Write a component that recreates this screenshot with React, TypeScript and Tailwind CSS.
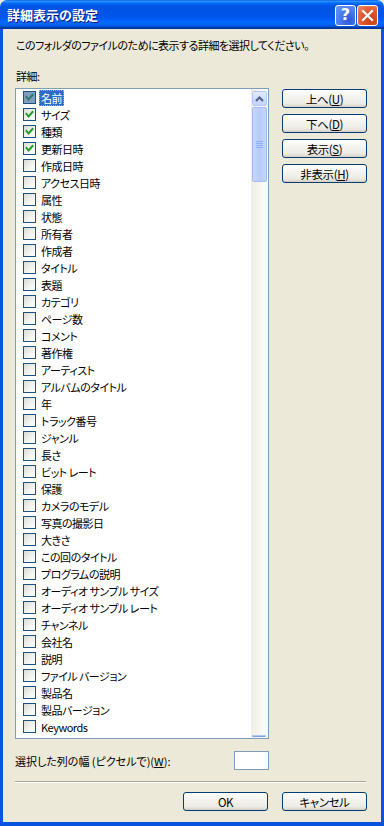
import React from "react";

const items: { label: string; checked: boolean }[] = [
  { label: "名前", checked: true },
  { label: "サイズ", checked: true },
  { label: "種類", checked: true },
  { label: "更新日時", checked: true },
  { label: "作成日時", checked: false },
  { label: "アクセス日時", checked: false },
  { label: "属性", checked: false },
  { label: "状態", checked: false },
  { label: "所有者", checked: false },
  { label: "作成者", checked: false },
  { label: "タイトル", checked: false },
  { label: "表題", checked: false },
  { label: "カテゴリ", checked: false },
  { label: "ページ数", checked: false },
  { label: "コメント", checked: false },
  { label: "著作権", checked: false },
  { label: "アーティスト", checked: false },
  { label: "アルバムのタイトル", checked: false },
  { label: "年", checked: false },
  { label: "トラック番号", checked: false },
  { label: "ジャンル", checked: false },
  { label: "長さ", checked: false },
  { label: "ビット レート", checked: false },
  { label: "保護", checked: false },
  { label: "カメラのモデル", checked: false },
  { label: "写真の撮影日", checked: false },
  { label: "大きさ", checked: false },
  { label: "この回のタイトル", checked: false },
  { label: "プログラムの説明", checked: false },
  { label: "オーディオ サンプル サイズ", checked: false },
  { label: "オーディオ サンプル レート", checked: false },
  { label: "チャンネル", checked: false },
  { label: "会社名", checked: false },
  { label: "説明", checked: false },
  { label: "ファイル バージョン", checked: false },
  { label: "製品名", checked: false },
  { label: "製品バージョン", checked: false },
  { label: "Keywords", checked: false },
];

function Check({ color }: { color: string }) {
  return (
    <svg width="11" height="11" viewBox="0 0 11 11" className="block">
      <polyline points="2.5,5 4.5,7.5 8.5,3" fill="none" stroke={color} strokeWidth="2" strokeLinecap="square" />
    </svg>
  );
}

function Checkbox({ checked, selected }: { checked: boolean; selected: boolean }) {
  return (
    <div
      className={
        selected
          ? "w-[13px] h-[13px] border border-[#1C5180] bg-[#7F9DBF] flex items-center justify-center shrink-0"
          : "w-[13px] h-[13px] border border-[#1C5180] bg-[linear-gradient(135deg,#DCDCD7_0%,#F4F4F1_60%,#FFFFFF_100%)] flex items-center justify-center shrink-0"
      }
    >
      {checked && <Check color={selected ? "#2F7A6A" : "#21A121"} />}
    </div>
  );
}

function XpButton({ children, w = "w-[85px]" }: { children: React.ReactNode; w?: string }) {
  return (
    <div
      className={`${w} h-[19px] rounded-[3px] border border-[#003C74] bg-[linear-gradient(to_bottom,#FFFFFF_0%,#F4F3EE_40%,#ECEBE6_80%,#D6D0C5_100%)] flex items-center justify-center text-[11.5px] leading-[14px] tracking-[-0.4px] text-black [font-feature-settings:'palt']`}
    >
      {children}
    </div>
  );
}

export default function App() {
  return (
    <div className="w-[384px] h-[826px] flex flex-col bg-[#ECE9D8] font-['Noto_Sans_CJK_JP',sans-serif] text-black">
      {/* Title bar */}
      <div className="h-[29px] shrink-0 rounded-t-[7px] bg-[linear-gradient(to_bottom,#0058EE_0%,#3593FF_4%,#288EFF_6%,#127DFF_8%,#036FFC_10%,#0262EE_14%,#0057E5_20%,#0054E3_24%,#0055EB_56%,#005BF5_66%,#026AFE_76%,#0062EF_86%,#0052D6_92%,#0040AB_94%,#003092_100%)] flex items-center pl-[7px] pr-[6px]">
        <div className="flex-1 text-white font-bold text-[13px] leading-[16px] tracking-[0px] [text-shadow:1px_1px_#0A1883]">
          詳細表示の設定
        </div>
        <div className="flex gap-[1px] items-center mt-[1px]">
          <div className="w-[21px] h-[21px] rounded-[3px] border border-white bg-[radial-gradient(circle_at_70%_75%,#2E58D8_0%,#4A7CF0_50%,#6C98F7_100%)] flex items-center justify-center text-white font-bold text-[16px] leading-none font-['DejaVu_Sans',sans-serif]">
            ?
          </div>
          <div className="w-[21px] h-[21px] rounded-[3px] border border-white bg-[radial-gradient(circle_at_70%_75%,#C9401A_0%,#E0582E_50%,#EB8B6B_100%)] flex items-center justify-center">
            <svg width="13" height="13" viewBox="0 0 13 13">
              <path d="M2 2 L11 11 M11 2 L2 11" stroke="white" strokeWidth="2.2" strokeLinecap="square" />
            </svg>
          </div>
        </div>
      </div>

      {/* Body */}
      <div className="flex-1 flex flex-col border-x-[3px] border-b-[4px] border-[#0753E0] pl-[12px] pr-[14px] pt-[8px] text-[11px] leading-[16px] tracking-[-0.5px] [font-feature-settings:'palt']">
        <div className="h-[16px] pl-[1px]">このフォルダのファイルのために表示する詳細を選択してください。</div>
        <div className="h-[16px] mt-[15px] pl-[1px]">詳細:</div>

        <div className="flex mt-[4px]">
          {/* List box */}
          <div className="w-[254px] h-[651px] border border-[#7F9DB9] bg-white flex">
            <div className="flex-1 flex flex-col pt-[0px]">
              {items.map((it, i) => (
                <div key={it.label} className="h-[17px] flex items-center pl-[7px] shrink-0">
                  <Checkbox checked={it.checked} selected={i === 0} />
                  <div
                    className={
                      i === 0
                        ? "ml-[3px] px-[2px] h-[16px] flex items-center bg-[#316AC5] text-white outline-1 outline-dotted outline-[#E8A33D] -outline-offset-1"
                        : "ml-[5px] h-[16px] flex items-center"
                    }
                  >
                    {it.label}
                  </div>
                </div>
              ))}
            </div>
            {/* Scrollbar */}
            <div className="w-[16px] mr-[1px] bg-[linear-gradient(to_right,#EEEDE5,#FDFDFB)] flex flex-col items-center pt-[2px] relative">
              <div className="w-[15px] h-[15px] rounded-[2px] border border-[#B4C8F6] bg-[linear-gradient(to_bottom,#E1EAFE,#C3D3FD)] flex items-center justify-center">
                <svg width="9" height="6" viewBox="0 0 9 6">
                  <path d="M1 5 L4.5 1.5 L8 5" fill="none" stroke="#4D6185" strokeWidth="2" />
                </svg>
              </div>
              <div className="w-[15px] h-[75px] mt-[1px] rounded-[2px] border border-[#A5BAF4] bg-[linear-gradient(to_right,#C9D8FC,#B8CCF9_50%,#C6D5FC)] flex flex-col items-center justify-center gap-[1px]">
                <div className="w-[7px] h-[1px] bg-[#8CB0F8]" />
                <div className="w-[7px] h-[1px] bg-[#8CB0F8]" />
                <div className="w-[7px] h-[1px] bg-[#8CB0F8]" />
                <div className="w-[7px] h-[1px] bg-[#8CB0F8]" />
              </div>
              <div className="absolute bottom-[1px] left-[1px] w-[14px] h-[2px] rounded-t-[1px] border-t border-x border-[#B4C8F6] bg-[#7E9EE8]" />
            </div>
          </div>

          {/* Side buttons */}
          <div className="ml-[13px] mt-[1px] flex flex-col gap-[6px]">
            <XpButton>
              <span>上へ(<u>U</u>)</span>
            </XpButton>
            <XpButton>
              <span>下へ(<u>D</u>)</span>
            </XpButton>
            <XpButton>
              <span>表示(<u>S</u>)</span>
            </XpButton>
            <XpButton>
              <span>非表示(<u>H</u>)</span>
            </XpButton>
          </div>
        </div>

        {/* Width row */}
        <div className="w-[254px] h-[19px] mt-[12px] flex items-center justify-between">
          <div className="tracking-[0px]">
            選択した列の幅 (ピクセルで)(<u>W</u>):
          </div>
          <div className="w-[35px] h-[19px] border border-[#7F9DB9] bg-white" />
        </div>

        {/* Separator */}
        <div className="w-[351px] mt-[11px] border-t border-[#ACA899] border-b border-b-white" />

        {/* Bottom buttons */}
        <div className="mt-[9px] flex justify-end gap-[14px]">
          <XpButton>OK</XpButton>
          <XpButton>キャンセル</XpButton>
        </div>
      </div>
    </div>
  );
}
